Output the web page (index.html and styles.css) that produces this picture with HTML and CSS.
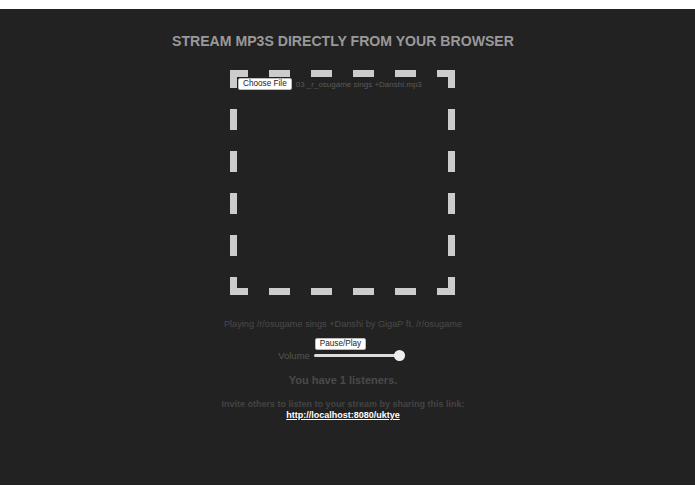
FILE: index.html
```html
<!DOCTYPE html>
<html>
<head>
<meta charset="utf-8">
<link rel="stylesheet" href="styles.css">
</head>
<body>
<div class="page">
  <div class="col">
    <h1 class="title">STREAM MP3S DIRECTLY FROM YOUR BROWSER</h1>
    <div class="drop">
      <div class="file-row">
        <button class="file-btn">Choose File</button>
        <span class="file-name">03 _r_osugame sings +Danshi.mp3</span>
      </div>
    </div>
    <p class="playing">Playing /r/osugame sings +Danshi by GigaP ft. /r/osugame</p>
    <div class="controls">
      <button class="pp-btn">Pause/Play</button>
      <div class="vol-row">
        <span class="vol-label">Volume</span>
        <input class="vol" type="range" min="0" max="100" value="100">
      </div>
    </div>
    <p class="listeners">You have 1 listeners.</p>
    <p class="invite">Invite others to listen to your stream by sharing this link:<br><a class="link" href="#">http://localhost:8080/uktye</a></p>
  </div>
</div>
</body>
</html>
```
FILE: styles.css
```css
html, body {
  margin: 0;
  padding: 0;
  background: #ffffff;
}
body {
  padding-top: 9px;
  font-family: "Liberation Sans", Arial, sans-serif;
}
.page {
  background: #222222;
  height: 476px;
  overflow: hidden;
}
.col {
  padding-right: 9px;
  display: flex;
  flex-direction: column;
  align-items: center;
}
.title {
  margin: 24px 0 0 0;
  font-size: 14.1px;
  line-height: 17px;
  font-weight: bold;
  color: #999999;
}
.drop {
  margin-top: 20px;
  margin-left: -1px;
  width: 225px;
  height: 225px;
  box-sizing: border-box;
  padding: 7px;
  background:
    repeating-linear-gradient(90deg, #cccccc 0 21px, transparent 21px 42px) -3px 0 / 100% 7px repeat-x,
    repeating-linear-gradient(90deg, #cccccc 0 21px, transparent 21px 42px) -3px 100% / 100% 7px repeat-x,
    repeating-linear-gradient(180deg, #cccccc 0 21px, transparent 21px 42px) 0 -3px / 7px 100% repeat-y,
    repeating-linear-gradient(180deg, #cccccc 0 21px, transparent 21px 42px) 100% -3px / 7px 100% repeat-y;
}
.file-row {
  display: flex;
  align-items: center;
  margin-top: 1px;
  margin-left: 1px;
}
.file-btn {
  font-family: "Liberation Sans", Arial, sans-serif;
  font-size: 8.2px;
  height: 12px;
  line-height: 10px;
  padding: 0 4px;
  background: #ffffff;
  color: #222;
  border: 1px solid #bbbbbb;
  border-radius: 2px;
}
.file-name {
  margin-left: 4px;
  font-size: 8px;
  color: #5a5a5a;
}
.playing {
  margin: 23px 0 0 0;
  font-size: 9.2px;
  line-height: 12px;
  color: #4a4a4a;
}
.controls {
  margin-top: 8px;
  display: flex;
  flex-direction: column;
  align-items: center;
}
.pp-btn {
  font-family: "Liberation Sans", Arial, sans-serif;
  font-size: 8.2px;
  height: 12px;
  line-height: 10px;
  padding: 0 4px;
  background: #ffffff;
  color: #222;
  border: 1px solid #bbbbbb;
  border-radius: 2px;
  margin-left: -5px;
}
.vol-row {
  display: flex;
  align-items: center;
  margin-top: -1px;
  margin-left: -3px;
}
.vol-label {
  font-size: 9.5px;
  color: #555555;
  margin-right: 4px;
}
.vol {
  -webkit-appearance: none;
  appearance: none;
  width: 91px;
  height: 12px;
  margin: 0;
  background: transparent;
}
.vol::-webkit-slider-runnable-track {
  height: 3px;
  background: #dddddd;
  border-radius: 2px;
}
.vol::-webkit-slider-thumb {
  -webkit-appearance: none;
  width: 11px;
  height: 11px;
  border-radius: 50%;
  background: #eeeeee;
  margin-top: -4px;
}
.listeners {
  margin: 13px 0 0 0;
  font-size: 11px;
  line-height: 13px;
  font-weight: bold;
  color: #4a4a4a;
}
.invite {
  margin: 12px 0 0 0;
  font-size: 9px;
  line-height: 11px;
  font-weight: bold;
  color: #444444;
  text-align: center;
}
.link {
  color: #ffffff;
  text-decoration: underline;
}
```
